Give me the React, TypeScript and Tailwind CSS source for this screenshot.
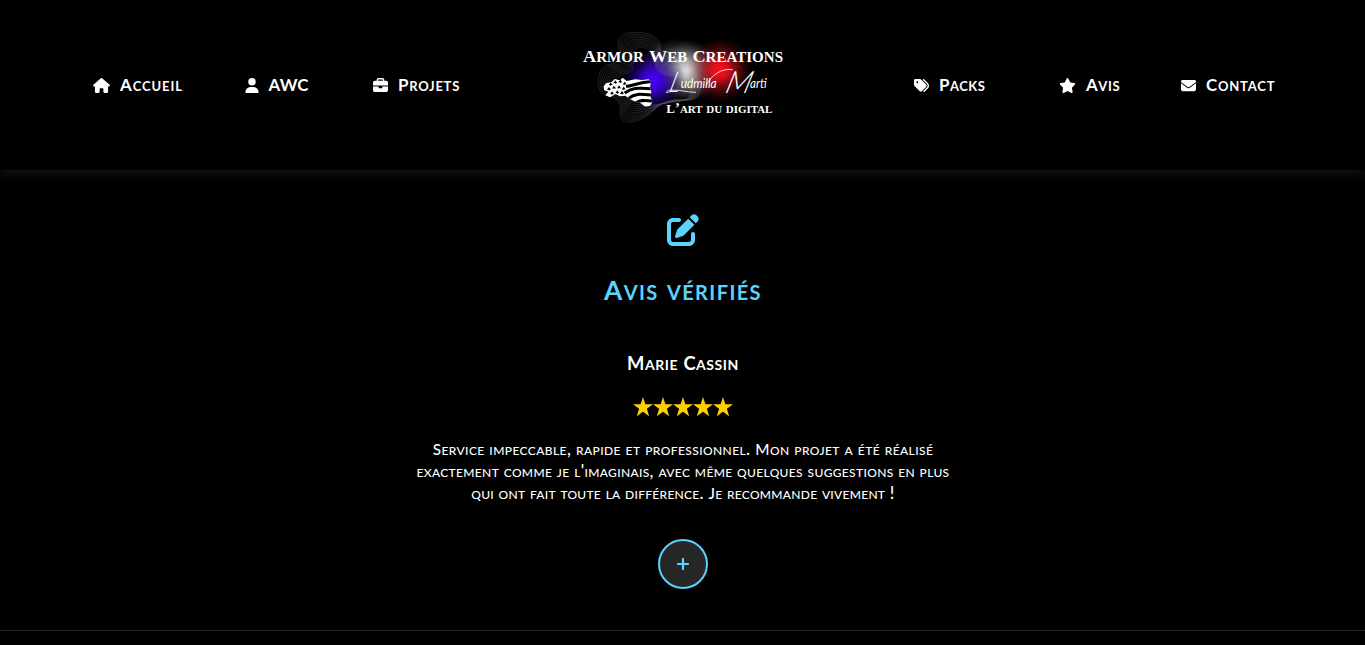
import React from "react";
import {
  FaHouse,
  FaUser,
  FaBriefcase,
  FaTags,
  FaStar,
  FaEnvelope,
  FaPenToSquare,
} from "react-icons/fa6";

// Small caps with the capitals toned down slightly, so both heights stay close.
function SmallCaps({ text, caps = "text-[0.94em]" }: { text: string; caps?: string }) {
  return (
    <>
      {text.split(/([A-Z]+)/).map((run, i) =>
        /^[A-Z]+$/.test(run) ? (
          <span key={i} className={caps}>
            {run}
          </span>
        ) : (
          run
        ),
      )}
    </>
  );
}

const OUTER = [275, 40, 268, 140, 385, 140, 398, 245, 285, 234, 224, 300, 147, 312, 154, 236, 78, 220, 92, 132, 158, 132, 134, 34];
const INNER = [250, 84, 258, 165, 345, 168, 372, 236, 290, 250, 232, 256, 184, 254, 188, 222, 134, 205, 136, 168, 196, 156, 182, 80];

function blob(t: number): string {
  const p = OUTER.map((v, i) => v + (INNER[i] - v) * t);
  const n = p.length / 2;
  const mid = (i: number) => {
    const a = i % n;
    const b = (i + 1) % n;
    return `${((p[a * 2] + p[b * 2]) / 2).toFixed(1)} ${((p[a * 2 + 1] + p[b * 2 + 1]) / 2).toFixed(1)}`;
  };
  let d = `M${mid(n - 1)}`;
  for (let i = 0; i < n; i++) d += `Q${p[i * 2].toFixed(1)} ${p[i * 2 + 1].toFixed(1)} ${mid(i)}`;
  return d + "Z";
}

const SPOTS = [
  [122, 192], [136, 186], [151, 184], [164, 190], [117, 206], [132, 202],
  [147, 201], [161, 205], [126, 219], [142, 216], [156, 218],
];

function Caps({ text, size }: { text: string; size: number }) {
  return (
    <>
      {text.split(/([A-Z])/).map((run, i) =>
        /^[A-Z]$/.test(run) ? (
          <tspan key={i} fontSize={size}>
            {run}
          </tspan>
        ) : (
          run
        ),
      )}
    </>
  );
}

function Logo() {
  return (
    <svg viewBox="0 0 690 345" className="h-[115px] w-[230px]">
      <defs>
        <radialGradient id="blue">
          <stop offset="0" stopColor="#4a00ff" />
          <stop offset=".3" stopColor="#3c00dc" stopOpacity=".92" />
          <stop offset=".65" stopColor="#22007c" stopOpacity=".6" />
          <stop offset="1" stopColor="#100040" stopOpacity="0" />
        </radialGradient>
        <radialGradient id="white">
          <stop offset="0" stopColor="#fff" />
          <stop offset=".25" stopColor="#ddd" stopOpacity=".85" />
          <stop offset=".65" stopColor="#999" stopOpacity=".4" />
          <stop offset="1" stopColor="#555" stopOpacity="0" />
        </radialGradient>
        <radialGradient id="red">
          <stop offset="0" stopColor="#ff1020" />
          <stop offset=".25" stopColor="#ee101c" stopOpacity=".9" />
          <stop offset=".6" stopColor="#991018" stopOpacity=".5" />
          <stop offset="1" stopColor="#400508" stopOpacity="0" />
        </radialGradient>
        <clipPath id="land">
          <path d="M100 200L108 190L125 186L134 177L150 181L158 173L170 183L196 178L216 180L236 178L243 187L240 200L244 216L242 232L248 246L240 257L226 260L212 250L196 245L178 236L166 227L150 229L137 222L120 232L106 226L115 215L103 211Z" />
        </clipPath>
      </defs>
      <ellipse cx="318" cy="148" rx="105" ry="96" fill="url(#white)" opacity=".65" />
      <circle cx="358" cy="152" r="92" fill="url(#white)" opacity=".85" />
      <circle cx="248" cy="182" r="96" fill="url(#blue)" />
      <circle cx="450" cy="150" r="100" fill="url(#red)" />
      <g fill="none" stroke="#ccc" strokeWidth="1.2" opacity=".38">
        {Array.from({ length: 10 }, (_, i) => (
          <path key={i} d={blob(i / 9)} />
        ))}
      </g>
      <g clipPath="url(#land)">
        <rect x="95" y="165" width="160" height="100" fill="#fff" />
        <g fill="none" stroke="#000" strokeWidth="9">
          <path d="M168 199C190 199 212 182 250 186" />
          <path d="M164 219C190 199 212 205 250 206" />
          <path d="M176 235C198 217 220 224 250 226" />
          <path d="M198 249C214 236 230 243 252 243" />
        </g>
        {SPOTS.map(([x, y]) => (
          <path key={`${x}-${y}`} d={`M${x} ${y - 5}l3 4 3 5-4-1-2 3-2-3-4 1 3-5z`} fill="#000" />
        ))}
      </g>
      <g fill="#fff" fontFamily="'Liberation Serif', serif" fontWeight="700">
        <text x="39" y="126" fontSize="58" textLength="600" lengthAdjust="spacingAndGlyphs" style={{ fontVariant: "small-caps" }}>
          <Caps text="Armor Web Creations" size={51} />
        </text>
        <text x="289" y="279" fontSize="45" textLength="318" lengthAdjust="spacingAndGlyphs" style={{ fontVariant: "small-caps" }}>
          <Caps text="L’art du digital" size={39} />
        </text>
      </g>
      <g
        fill="#fff"
        fontFamily="Lato, sans-serif"
        fontStyle="italic"
        fontWeight="400"
        style={{ fontVariant: "normal" }}
      >
        <g transform="translate(295 217) skewX(-16)">
          <text fontSize="86" fontWeight="300" textLength="30" lengthAdjust="spacingAndGlyphs">L</text>
        </g>
        <text x="332" y="205" fontSize="41" textLength="108" lengthAdjust="spacingAndGlyphs">udmilla</text>
        <g transform="translate(462 219) skewX(-16)">
          <text fontSize="92" fontWeight="300" textLength="76" lengthAdjust="spacingAndGlyphs">M</text>
        </g>
        <text x="540" y="205" fontSize="41" textLength="50" lengthAdjust="spacingAndGlyphs">arti</text>
      </g>
      <g fill="none" stroke="#fff" strokeWidth="2.4" strokeLinecap="round">
        <path d="M300 215C282 224 286 210 306 210C330 209 350 217 377 217" />
        <path d="M408 196C424 164 458 143 487 149" />
      </g>
    </svg>
  );
}

type NavItem = {
  label: string;
  Icon: React.ComponentType<{ className?: string }>;
  width: string;
  icon: string;
  tracking: string;
};

const LEFT: NavItem[] = [
  { label: "Accueil", Icon: FaHouse, width: "w-[90px]", icon: "w-[17px]", tracking: "tracking-[0.9px]" },
  { label: "AWC", Icon: FaUser, width: "w-[64px] mr-[3px]", icon: "w-[14px]", tracking: "tracking-[0.2px]" },
  { label: "Projets", Icon: FaBriefcase, width: "w-[87px]", icon: "w-[15px]", tracking: "tracking-[0.75px]" },
];
const RIGHT: NavItem[] = [
  { label: "Packs", Icon: FaTags, width: "w-[71px] mr-[13px]", icon: "w-[15px]", tracking: "tracking-[0.5px]" },
  { label: "Avis", Icon: FaStar, width: "w-[61px]", icon: "w-[17px]", tracking: "tracking-[0.6px]" },
  { label: "Contact", Icon: FaEnvelope, width: "w-[94px]", icon: "w-[15px]", tracking: "tracking-[0.8px]" },
];

function NavLink({ item }: { item: NavItem }) {
  const { Icon } = item;
  return (
    <a href="#" className={`flex items-center gap-[10px] whitespace-nowrap ${item.width}`}>
      <Icon className={`h-[15px] shrink-0 ${item.icon}`} />
      <span className={`pb-px text-[18px] leading-[21px] font-bold ${item.tracking}`}>
        <SmallCaps text={item.label} />
      </span>
    </a>
  );
}

export default function App() {
  return (
    <div className="h-[645px] w-full overflow-hidden bg-black font-['Lato',sans-serif] text-white [font-variant-caps:small-caps]">
      <header className="flex h-[170px] items-start justify-between pr-[90px] pl-[93px] shadow-[0_4px_12px_rgba(255,255,255,0.08)]">
        <nav className="flex w-[367px] justify-between pt-[74px]">
          {LEFT.map((item) => (
            <NavLink key={item.label} item={item} />
          ))}
        </nav>
        <div className="pt-5 pr-1">
          <Logo />
        </div>
        <nav className="flex w-[361px] justify-between pt-[74px]">
          {RIGHT.map((item) => (
            <NavLink key={item.label} item={item} />
          ))}
        </nav>
      </header>

      <main className="flex h-[461px] flex-col items-center border-b border-[#222] pt-11 text-center">
        <FaPenToSquare className="size-8 text-[#5bd3ff]" />
        <h1 className="mt-[23px] pl-px text-[28px] leading-10 font-bold tracking-[1.4px] whitespace-nowrap text-[#5bd3ff]">
          <SmallCaps text="Avis vérifiés" />
        </h1>
        <h2 className="mt-[41px] pl-px text-[19.5px] leading-6 font-bold tracking-[0.55px] whitespace-nowrap">
          <SmallCaps text="Marie Cassin" />
        </h2>
        <div className="mt-5 flex h-6 items-center text-[#ffd000]">
          {[0, 1, 2, 3, 4].map((i) => (
            <svg key={i} viewBox="0 0 20 20" className="size-5" fill="currentColor">
              <path d="M10 0L12.4 7.2H20L13.9 11.8L16.2 19.2L10 14.7L3.8 19.2L6.1 11.8L0 7.2H7.6Z" />
            </svg>
          ))}
        </div>
        <p className="mt-[19px] pl-px text-[17px] leading-[22px] font-medium whitespace-nowrap">
          <span className="block tracking-[0.41px]"><SmallCaps caps="text-[0.9em]" text="Service impeccable, rapide et professionnel. Mon projet a été réalisé" /></span>
          <span className="block tracking-[0.34px]"><SmallCaps caps="text-[0.9em]" text="exactement comme je l'imaginais, avec même quelques suggestions en plus" /></span>
          <span className="block tracking-[0.28px]"><SmallCaps caps="text-[0.9em]" text="qui ont fait toute la différence. Je recommande vivement !" /></span>
        </p>
        <button className="mt-[35px] flex size-[50px] items-center justify-center rounded-full border-2 border-[#5bd3ff] bg-[#262626] text-[#5bd3ff]">
          <svg viewBox="0 0 12 12" className="mb-px size-3" stroke="currentColor" strokeWidth="2.2" strokeLinecap="round">
            <path d="M6 1V11M1 6H11" />
          </svg>
        </button>
      </main>
    </div>
  );
}
